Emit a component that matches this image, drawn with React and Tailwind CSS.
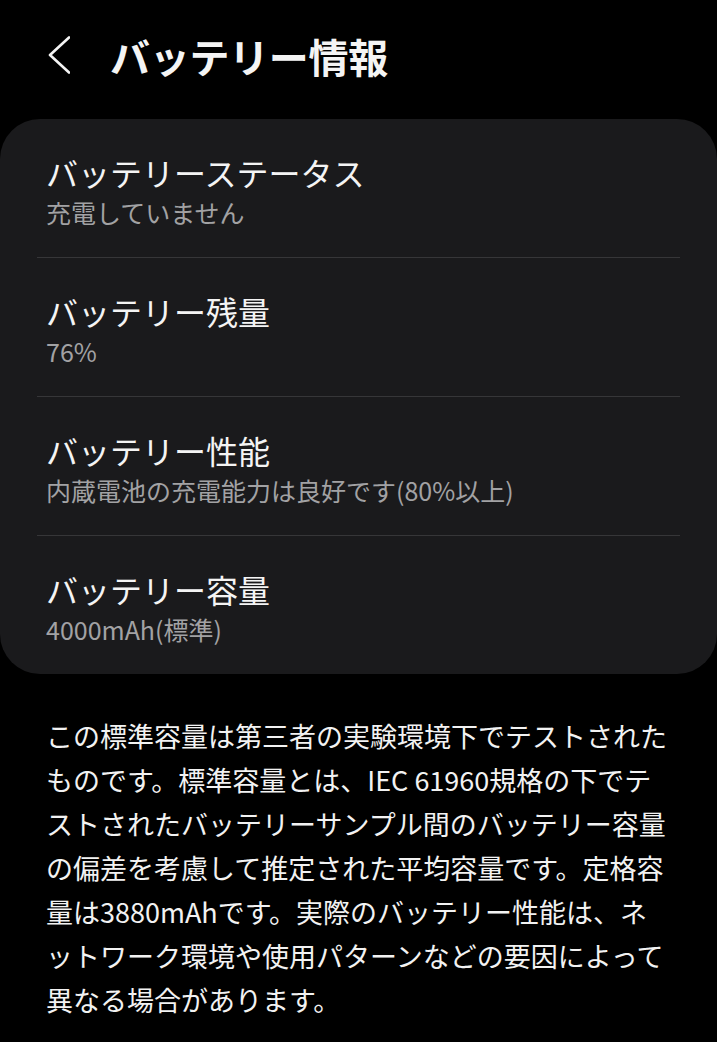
import React from "react";

const font = { fontFamily: '"Noto Sans CJK JP", "Noto Sans", sans-serif' };

const rows = [
  { title: "バッテリーステータス", sub: "充電していません" },
  { title: "バッテリー残量", sub: "76%" },
  { title: "バッテリー性能", sub: "内蔵電池の充電能力は良好です(80%以上)" },
  { title: "バッテリー容量", sub: "4000mAh(標準)" },
];

const lines = [
  "この標準容量は第三者の実験環境下でテストされた",
  "ものです。標準容量とは、IEC 61960規格の下でテ",
  "ストされたバッテリーサンプル間のバッテリー容量",
  "の偏差を考慮して推定された平均容量です。定格容",
  "量は3880mAhです。実際のバッテリー性能は、ネ",
  "ットワーク環境や使用パターンなどの要因によって",
  "異なる場合があります。",
];

export default function App() {
  return (
    <div className="w-[717px] h-[1042px] bg-black overflow-hidden text-[#f4f4f4]" style={font}>
      <div className="flex items-start h-[119px] pt-[36px]">
        <svg className="ml-[46px] shrink-0" width="24" height="40" viewBox="0 0 24 40" fill="none">
          <polyline points="23,1.5 4,19 23,36.5" stroke="#f4f4f4" strokeWidth="2.6" strokeLinecap="round" strokeLinejoin="round" />
        </svg>
        <h1 className="ml-[40px] text-[40px] leading-[40px] font-bold tracking-[-0.3px]">バッテリー情報</h1>
      </div>

      <div className="bg-[#1a1a1c] rounded-[40px] flex flex-col">
        {rows.map((r, i) => (
          <React.Fragment key={r.title}>
            {i > 0 && <div className="mx-[37px] h-px bg-[#363638]" />}
            <div className="h-[138px] pl-[46px] pt-[33px]">
              <div className="text-[32px] leading-[40px] text-[#f4f4f4]">{r.title}</div>
              <div className="mt-[4px] text-[25px] leading-[32px] text-[#a2a2a4]">{r.sub}</div>
            </div>
          </React.Fragment>
        ))}
      </div>

      <div className="mt-[40px] px-[46px] text-[27px] leading-[44px] text-[#f2f2f2]">
        {lines.map((l) => (
          <div key={l} className="whitespace-nowrap">{l}</div>
        ))}
      </div>
    </div>
  );
}
